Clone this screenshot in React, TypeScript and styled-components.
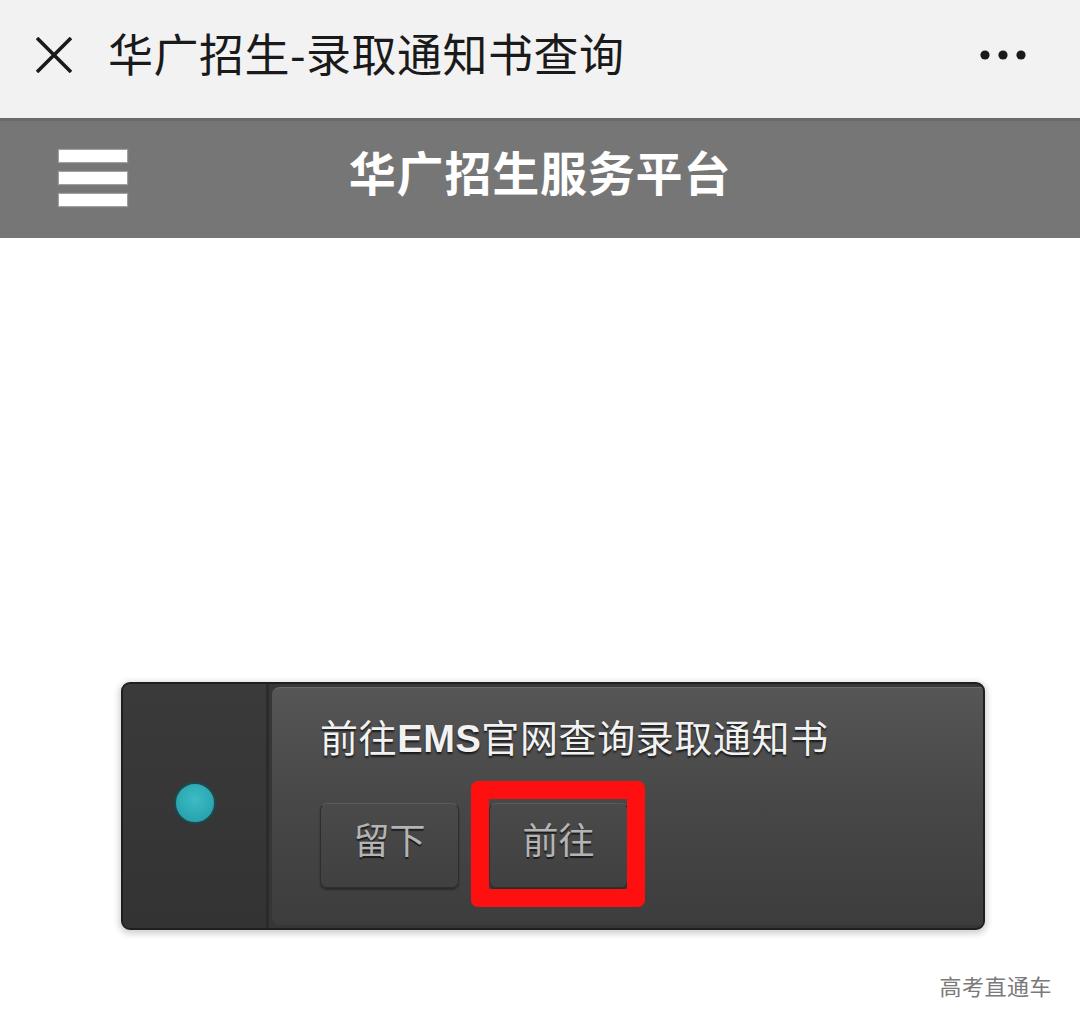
import styled, { createGlobalStyle } from "styled-components";

const Global = createGlobalStyle`
	html, body {
		margin: 0;
		padding: 0;
		background: #fff;
	}
	body {
		font-family: "Noto Sans CJK SC", "Noto Sans", sans-serif;
	}
`;

const Page = styled.div`
	width: 1080px;
	height: 1028px;
	display: flex;
	flex-direction: column;
	overflow: hidden;
`;

const TopBar = styled.div`
	height: 118px;
	background: #f2f2f2;
	display: flex;
	align-items: center;
	padding: 0 53px 0 36px;
	box-sizing: border-box;
	gap: 36px;

	.title {
		flex: 1;
		font-size: 45px;
		color: #1a1a1a;
		line-height: 1;
		margin-top: -14px;
		letter-spacing: 0.5px;
	}

	svg {
		margin-top: -8px;
	}
`;

const Header = styled.div`
	position: relative;
	height: 120px;
	background: #767676;
	border-top: 3px solid #6a6a6a;
	box-sizing: border-box;
	display: flex;
	align-items: center;
	justify-content: center;

	h1 {
		margin: 0 0 18px;
		font-size: 47px;
		font-weight: 700;
		color: #fff;
		letter-spacing: 0.8px;
	}
`;

const Burger = styled.div`
	position: absolute;
	left: 59px;
	top: 29px;
	width: 68px;
	display: flex;
	flex-direction: column;
	gap: 10px;

	span {
		display: block;
		height: 12px;
		background: #fff;
		box-shadow: 0 0 1px 1px rgba(200, 200, 200, 0.5);
	}
`;

const Body = styled.div`
	flex: 1;
	display: flex;
	flex-direction: column;
	padding: 444px 0 0 121px;
	position: relative;
`;

const Dialog = styled.div`
	width: 864px;
	height: 248px;
	box-sizing: border-box;
	display: flex;
	background: #363636;
	border: 2px solid #1f1f1f;
	border-radius: 9px;
	box-shadow: 0 2px 6px 2px rgba(0, 0, 0, 0.18);
	overflow: hidden;
`;

const Side = styled.div`
	width: 143px;
	display: flex;
	align-items: center;
	justify-content: center;
	background: linear-gradient(#3a3a3a, #333);
	border-right: 3px solid #2b2b2b;
	padding-bottom: 6px;
`;

const Dot = styled.div`
	width: 38px;
	height: 38px;
	border-radius: 50%;
	background: radial-gradient(circle at 50% 40%, #3cbcc4, #229aa5);
	border: 2px solid #1d4a4e;
`;

const Panel = styled.div`
	flex: 1;
	margin: 3px 0 3px 3px;
	border-radius: 8px 0 0 8px;
	background: linear-gradient(#565656, #474747 50%, #3d3d3d);
	border-top: 1px solid #6a6a6a;
	padding: 26px 0 0 48px;
	display: flex;
	flex-direction: column;
`;

const Message = styled.div`
	font-size: 38px;
	line-height: 44px;
	letter-spacing: 0.6px;
	color: #f2f2f2;
	text-shadow: 0 2px 2px rgba(0, 0, 0, 0.7);

	b {
		font-family: "Liberation Sans", sans-serif;
		font-weight: 700;
	}
`;

const Actions = styled.div`
	display: flex;
	gap: 30px;
	margin-top: 42px;
`;

const Btn = styled.div<{ $marked?: boolean }>`
	position: relative;
	width: 139px;
	height: 85px;
	box-sizing: border-box;
	border-radius: 7px;
	border: 1px solid #2e2e2e;
	border-top-color: #5a5a5a;
	background: linear-gradient(#4a4a4a, #404040);
	box-shadow: 0 2px 2px rgba(0, 0, 0, 0.35);
	display: flex;
	align-items: center;
	justify-content: center;
	font-size: 36px;
	color: #b4b4b4;
	text-shadow: 0 2px 1px rgba(0, 0, 0, 0.6);
	padding-bottom: 16px;

	&::after {
		content: "";
		display: ${p => (p.$marked ? "block" : "none")};
		position: absolute;
		left: -19px;
		right: -18px;
		top: -23px;
		bottom: -20px;
		border: 18px solid #ff1010;
		border-radius: 7px;
	}
`;

const Footer = styled.div`
	position: absolute;
	right: 28px;
	bottom: 27px;
	font-size: 22px;
	color: #7a7a7a;
	letter-spacing: 0.5px;
`;

const CloseIcon = () => (
	<svg width="36" height="36" viewBox="0 0 36 36">
		<path d="M1 1 L35 35 M35 1 L1 35" stroke="#1a1a1a" strokeWidth="3.6" />
	</svg>
);

const MoreIcon = () => (
	<svg width="48" height="12" viewBox="0 0 48 12">
		<circle cx="6" cy="6" r="4.6" fill="#1a1a1a" />
		<circle cx="24" cy="6" r="4.6" fill="#1a1a1a" />
		<circle cx="42" cy="6" r="4.6" fill="#1a1a1a" />
	</svg>
);

export default function App() {
	return (
		<Page>
			<Global />
			<TopBar>
				<CloseIcon />
				<div className="title">华广招生-录取通知书查询</div>
				<MoreIcon />
			</TopBar>
			<Header>
				<Burger>
					<span />
					<span />
					<span />
				</Burger>
				<h1>华广招生服务平台</h1>
			</Header>
			<Body>
				<Dialog>
					<Side>
						<Dot />
					</Side>
					<Panel>
						<Message>
							前往<b>EMS</b>官网查询录取通知书
						</Message>
						<Actions>
							<Btn>留下</Btn>
							<Btn $marked>前往</Btn>
						</Actions>
					</Panel>
				</Dialog>
				<Footer>高考直通车</Footer>
			</Body>
		</Page>
	);
}
